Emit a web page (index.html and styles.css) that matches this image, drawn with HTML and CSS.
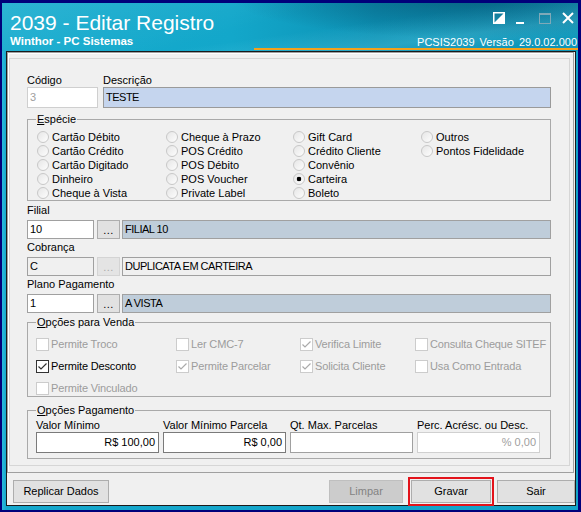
FILE: index.html
```html
<!DOCTYPE html>
<html>
	<head>
		<title>2039 - Editar Registro</title>
		<meta http-equiv="Content-Type" content="text/html; charset=utf-8" />
		<link rel="stylesheet" href="styles.css">
	</head>
	<body>
	<div class="window">
		<div class="titlebar">
			<div class="titles">
				<h1>2039 - Editar Registro</h1>
				<div class="subtitle">Winthor - PC Sistemas</div>
			</div>
			<div class="titleright">
				<div class="controls">
					<svg width="12" height="12" viewBox="0 0 12 12"><rect x="0.75" y="0.75" width="10.5" height="10.5" fill="none" stroke="#fff" stroke-width="1.5"/><polygon points="11,1 11,11 1,11" fill="#fff"/></svg>
					<svg width="12" height="12" viewBox="0 0 12 12"><rect x="0" y="10" width="8" height="2" fill="#fff"/></svg>
					<svg width="12" height="12" viewBox="0 0 12 12"><rect x="0.5" y="1.5" width="11" height="10" fill="none" stroke="#7fa9b8"/><rect x="0" y="1" width="12" height="2" fill="#7fa9b8"/></svg>
					<svg width="12" height="12" viewBox="0 0 12 12"><path d="M1 1 L11 11 M11 1 L1 11" stroke="#fff" stroke-width="2"/></svg>
				</div>
				<div class="version">PCSIS2039 Versão 29.0.02.000</div>
			</div>
		</div>

		<div class="client">
			<div class="panel">
				<div class="frame">
					<div class="toprow">
						<div class="codigo">
							<label>Código</label>
							<div class="edit pale">3</div>
						</div>
						<div class="descricao">
							<label>Descrição</label>
							<div class="edit blue">TESTE</div>
						</div>
					</div>

					<fieldset class="group especie">
						<legend><u>E</u>spécie</legend>
						<div class="radios">
							<div class="opt"><span class="radio"></span>Cartão Débito</div>
							<div class="opt"><span class="radio"></span>Cartão Crédito</div>
							<div class="opt"><span class="radio"></span>Cartão Digitado</div>
							<div class="opt"><span class="radio"></span>Dinheiro</div>
							<div class="opt"><span class="radio"></span>Cheque à Vista</div>
							<div class="opt"><span class="radio"></span>Cheque à Prazo</div>
							<div class="opt"><span class="radio"></span>POS Crédito</div>
							<div class="opt"><span class="radio"></span>POS Débito</div>
							<div class="opt"><span class="radio"></span>POS Voucher</div>
							<div class="opt"><span class="radio"></span>Private Label</div>
							<div class="opt"><span class="radio"></span>Gift Card</div>
							<div class="opt"><span class="radio"></span>Crédito Cliente</div>
							<div class="opt"><span class="radio"></span>Convênio</div>
							<div class="opt"><span class="radio on"></span>Carteira</div>
							<div class="opt"><span class="radio"></span>Boleto</div>
							<div class="opt"><span class="radio"></span>Outros</div>
							<div class="opt"><span class="radio"></span>Pontos Fidelidade</div>
						</div>
					</fieldset>

					<label class="lbl first">Filial</label>
					<div class="lookup">
						<div class="edit code">10</div>
						<div class="dots">...</div>
						<div class="edit name">FILIAL 10</div>
					</div>
					<label class="lbl">Cobrança</label>
					<div class="lookup">
						<div class="edit code off">C</div>
						<div class="dots off">...</div>
						<div class="edit name off">DUPLICATA EM CARTEIRA</div>
					</div>
					<label class="lbl">Plano Pagamento</label>
					<div class="lookup">
						<div class="edit code">1</div>
						<div class="dots">...</div>
						<div class="edit name">A VISTA</div>
					</div>

					<fieldset class="group venda">
						<legend><u>O</u>pções para Venda</legend>
						<div class="checks">
							<div class="chk off"><svg class="cb" width="13" height="13" viewBox="0 0 13 13"><rect x="0.5" y="0.5" width="12" height="12"/></svg>Permite Troco</div>
							<div class="chk off"><svg class="cb" width="13" height="13" viewBox="0 0 13 13"><rect x="0.5" y="0.5" width="12" height="12"/></svg>Ler CMC-7</div>
							<div class="chk off"><svg class="cb" width="13" height="13" viewBox="0 0 13 13"><rect x="0.5" y="0.5" width="12" height="12"/><polyline points="2.5,6.5 5,9 10.5,3.5"/></svg>Verifica Limite</div>
							<div class="chk off"><svg class="cb" width="13" height="13" viewBox="0 0 13 13"><rect x="0.5" y="0.5" width="12" height="12"/></svg>Consulta Cheque SITEF</div>
							<div class="chk"><svg class="cb" width="13" height="13" viewBox="0 0 13 13"><rect x="0.5" y="0.5" width="12" height="12"/><polyline points="2.5,6.5 5,9 10.5,3.5"/></svg>Permite Desconto</div>
							<div class="chk off"><svg class="cb" width="13" height="13" viewBox="0 0 13 13"><rect x="0.5" y="0.5" width="12" height="12"/><polyline points="2.5,6.5 5,9 10.5,3.5"/></svg>Permite Parcelar</div>
							<div class="chk off"><svg class="cb" width="13" height="13" viewBox="0 0 13 13"><rect x="0.5" y="0.5" width="12" height="12"/><polyline points="2.5,6.5 5,9 10.5,3.5"/></svg>Solicita Cliente</div>
							<div class="chk off"><svg class="cb" width="13" height="13" viewBox="0 0 13 13"><rect x="0.5" y="0.5" width="12" height="12"/></svg>Usa Como Entrada</div>
							<div class="chk off"><svg class="cb" width="13" height="13" viewBox="0 0 13 13"><rect x="0.5" y="0.5" width="12" height="12"/></svg>Permite Vinculado</div>
						</div>
					</fieldset>

					<fieldset class="group pagamento">
						<legend><u>O</u>pções Pagamento</legend>
						<div class="pay">
							<div><label>Valor Mínimo</label><div class="edit num dark">R$ 100,00</div></div>
							<div><label>Valor Mínimo Parcela</label><div class="edit num dark">R$ 0,00</div></div>
							<div><label>Qt. Max. Parcelas</label><div class="edit num"></div></div>
							<div><label>Perc. Acrésc. ou Desc.</label><div class="edit num off">% 0,00</div></div>
						</div>
					</fieldset>
				</div>
			</div>

			<div class="buttons">
				<div class="btn replicar">Replicar Dados</div>
				<div class="btn limpar off">Limpar</div>
				<div class="btn gravar">Gravar</div>
				<div class="btn sair">Sair</div>
			</div>
		</div>
	</div>
	</body>
</html>
```

FILE: styles.css
```css
body {
	margin: 0;
	padding: 3px 3px 2px 2px;
	background: #00007a;
	font-family: "Liberation Sans", Arial, sans-serif;
	font-size: 11px;
	color: #000;
	overflow: hidden;
}
.window {
	height: 507px;
	box-sizing: border-box;
	padding-bottom: 4px;
	display: flex;
	flex-direction: column;
	background: linear-gradient(90deg, #2bb9dc 0px, #16a8cd 4px, #13a3c8 100%);
}

/* barra de titulo */
.titlebar {
	height: 48px;
	box-sizing: border-box;
	padding: 0 0 1px 8px;
	display: flex;
	justify-content: space-between;
	color: #fff;
	background:
		radial-gradient(60% 120% at 82% -10%, rgba(3, 66, 96, 0.6) 0%, rgba(3, 66, 96, 0) 70%),
		linear-gradient(172deg, rgba(255, 255, 255, 0) 55%, rgba(120, 220, 240, 0.25) 75%, rgba(255, 255, 255, 0) 90%),
		linear-gradient(165deg, rgba(255, 255, 255, 0.10) 0%, rgba(255, 255, 255, 0) 45%),
		linear-gradient(90deg, #15abce 0%, #13a7ca 40%, #0d92b5 65%, #0f97ba 100%);
}
.titlebar h1 {
	margin: 0;
	padding-top: 7px;
	font-size: 21px;
	font-weight: normal;
	line-height: 25px;
}
.subtitle {
	font-size: 11.5px;
	font-weight: bold;
	line-height: 13px;
}
.titleright {
	width: 324px;
	padding-top: 9px;
	display: flex;
	flex-direction: column;
	justify-content: space-between;
	align-items: flex-end;
}
.controls {
	display: flex;
	gap: 11px;
	margin-right: 4px;
	height: 12px;
}
.controls svg {
	display: block;
}
.version {
	align-self: stretch;
	text-align: right;
	font-size: 11px;
	line-height: 12px;
	word-spacing: 2px;
	padding-right: 1px;
	border-bottom: 2px solid #f4a11c;
}

/* area do formulario */
.client {
	height: 455px;
	box-sizing: border-box;
	margin: 0 2px 0 4px;
	border: 1px solid #1a1a1a;
	background: #f0f0f0;
	display: flex;
	flex-direction: column;
}
.panel {
	height: 421px;
	box-sizing: border-box;
	margin-right: 1px;
	padding: 5px 3px 6px 1px;
	border: 1px solid #a0a0a0;
	box-shadow: inset 1px 1px 0 #fff;
	display: flex;
	flex-direction: column;
}
.frame {
	flex: 1;
	padding: 14px 18px 5px 17px;
	border: 1px solid #d6d6d6;
}
label {
	display: block;
	line-height: 14px;
	height: 14px;
	white-space: nowrap;
}
.edit {
	height: 21px;
	box-sizing: border-box;
	border: 1px solid #a0a0a0;
	background: #fff;
	line-height: 19px;
	padding: 0 2px;
	white-space: nowrap;
	overflow: hidden;
}
.toprow {
	display: flex;
	gap: 5px;
}
.codigo {
	width: 71px;
}
.descricao {
	flex: 1;
}
.edit.pale {
	border-color: #cfcfcf;
	color: #a0a0a0;
}
.edit.blue {
	background: #c5d5ee;
	border-color: #9a9a9a;
	letter-spacing: -0.5px;
}

/* grupos */
.group {
	margin: 0;
	padding: 0 8px;
	border: 1px solid #a9a9a9;
	min-width: 0;
}
.group legend {
	padding: 0 1px;
	line-height: 14px;
}
.especie {
	margin-top: 4px;
	padding-top: 4px;
}
.radios {
	display: grid;
	grid-template-rows: repeat(5, 14px);
	grid-template-columns: 129px 127px 128px auto;
	grid-auto-flow: column;
	padding-left: 1px;
}
.opt {
	display: flex;
	align-items: center;
	gap: 3px;
	white-space: nowrap;
}
.radio {
	width: 12px;
	height: 12px;
	box-sizing: border-box;
	border-radius: 50%;
	border: 1px solid #c8c8c8;
	background: linear-gradient(135deg, #e6e6e6, #fdfdfd);
}
.radio.on {
	background: radial-gradient(circle, #000 0, #000 2px, rgba(0, 0, 0, 0) 2.6px), linear-gradient(135deg, #e6e6e6, #fdfdfd);
}

/* filial / cobranca / plano */
.lbl {
	margin-top: 1px;
	margin-bottom: 3px;
}
.lbl.first {
	margin-top: 2px;
}
.lookup {
	display: flex;
}
.lookup .edit {
	height: 19px;
	line-height: 17px;
}
.lookup .code {
	width: 67px;
	margin-right: 3px;
}
.lookup .name {
	flex: 1;
	margin-left: 2px;
	background: #bfcdda;
	letter-spacing: -0.5px;
}
.lookup .off {
	background: #f0f0f0;
}
.dots {
	width: 23px;
	height: 19px;
	box-sizing: border-box;
	border: 1px solid #adadad;
	background: #e1e1e1;
	text-align: center;
	line-height: 19px;
	letter-spacing: 0.5px;
}
.dots.off {
	border-color: #d4d4d4;
	background: #e4e4e4;
	color: #aaa;
}

/* opcoes para venda */
.venda {
	margin-top: 2px;
	padding-top: 8px;
	padding-bottom: 1px;
}
.checks {
	display: grid;
	grid-template-columns: 140px 124px 115px auto;
	grid-auto-rows: 14px;
	row-gap: 8px;
}
.chk {
	display: flex;
	align-items: center;
	gap: 2px;
	white-space: nowrap;
	letter-spacing: -0.15px;
}
.cb {
	display: block;
	flex: none;
}
.cb rect {
	fill: #fff;
	stroke: #333;
}
.cb polyline {
	fill: none;
	stroke: #333;
	stroke-width: 1.2;
}
.chk.off {
	color: #9c9c9c;
}
.chk.off .cb rect {
	stroke: #cccccc;
}
.chk.off .cb polyline {
	stroke: #aaa;
}

/* opcoes pagamento */
.pagamento {
	margin-top: 6px;
	padding-top: 2px;
	padding-bottom: 5px;
}
.pay {
	display: grid;
	grid-template-columns: repeat(4, 123px);
	column-gap: 4px;
}
.pay label {
	line-height: 13px;
	height: 13px;
}
.edit.num {
	text-align: right;
	padding-right: 3px;
}
.edit.dark {
	border-color: #7a7a7a;
}
.edit.num.off {
	border-color: #d0d0d0;
	color: #a0a0a0;
}

/* botoes */
.buttons {
	display: flex;
	padding: 7px 0 0 6px;
}
.btn {
	height: 23px;
	box-sizing: border-box;
	border: 1px solid #adadad;
	background: #e1e1e1;
	text-align: center;
	line-height: 21px;
	white-space: nowrap;
}
.replicar {
	width: 96px;
}
.limpar {
	width: 74px;
	margin-left: auto;
}
.btn.off {
	background: #cccccc;
	border-color: #bfbfbf;
	color: #838383;
}
.gravar {
	width: 80px;
	margin-left: 8px;
	outline: 2px solid #e3131b;
	outline-offset: 1px;
}
.sair {
	width: 78px;
	margin-left: 6px;
}
```
